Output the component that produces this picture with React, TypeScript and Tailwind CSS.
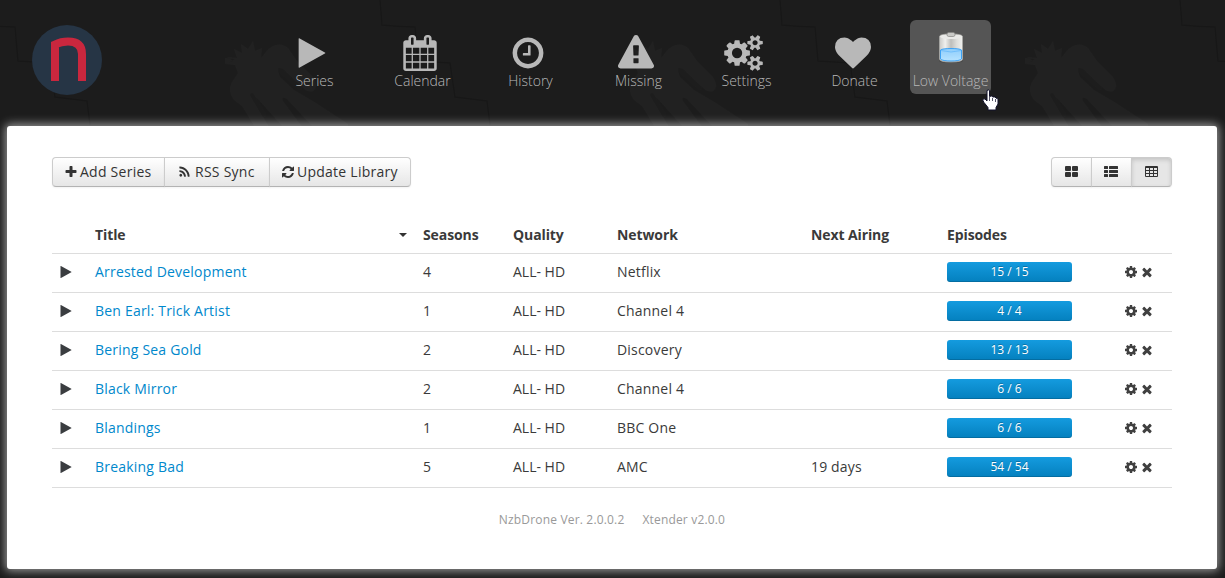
import React from "react";

const PLAY = "M1576 927l-1328 738q-23 13-39.5 3t-16.5-36v-1472q0-26 16.5-36t39.5 3l1328 738q23 13 23 31t-23 31z";
const CALENDAR = "M192 1664h288v-288h-288v288zm352 0h320v-288h-320v288zm-352-352h288v-320h-288v320zm352 0h320v-320h-320v320zm-352-384h288v-288h-288v288zm736 736h320v-288h-320v288zm-384-736h320v-288h-320v288zm768 736h288v-288h-288v288zm-384-352h320v-320h-320v320zm-352-864v-288q0-13-9.5-22.5t-22.5-9.5h-64q-13 0-22.5 9.5t-9.5 22.5v288q0 13 9.5 22.5t22.5 9.5h64q13 0 22.5-9.5t9.5-22.5zm736 864h288v-320h-288v320zm-384-384h320v-288h-320v288zm384 0h288v-288h-288v288zm32-480v-288q0-13-9.5-22.5t-22.5-9.5h-64q-13 0-22.5 9.5t-9.5 22.5v288q0 13 9.5 22.5t22.5 9.5h64q13 0 22.5-9.5t9.5-22.5zm384-64v1280q0 52-38 90t-90 38h-1408q-52 0-90-38t-38-90v-1280q0-52 38-90t90-38h128v-96q0-66 47-113t113-47h64q66 0 113 47t47 113v96h384v-96q0-66 47-113t113-47h64q66 0 113 47t47 113v96h128q52 0 90 38t38 90z";
const CLOCK = "M1024 544v448q0 14-9 23t-23 9h-320q-14 0-23-9t-9-23v-64q0-14 9-23t23-9h224v-352q0-14 9-23t23-9h64q14 0 23 9t9 23zm416 352q0-148-73-273t-198-198-273-73-273 73-198 198-73 273 73 273 198 198 273 73 273-73 198-198 73-273zm224 0q0 209-103 385.5t-279.5 279.5-385.5 103-385.5-103-279.5-279.5-103-385.5 103-385.5 279.5-279.5 385.5-103 385.5 103 279.5 279.5 103 385.5z";
const WARNING = "M1024 1375v-190q0-14-9.5-23.5t-22.5-9.5h-192q-13 0-22.5 9.5t-9.5 23.5v190q0 14 9.5 23.5t22.5 9.5h192q13 0 22.5-9.5t9.5-23.5zm-2-374l18-459q0-12-10-19-13-11-24-11h-220q-11 0-24 11-10 7-10 21l17 457q0 10 10 16.5t24 6.5h185q14 0 23.5-6.5t10.5-16.5zm-14-934l768 1408q35 63-2 126-17 29-46.5 46t-63.5 17h-1536q-34 0-63.5-17t-46.5-46q-37-63-2-126l768-1408q17-31 47-49t65-18 65 18 47 49z";
const HEART = "M896 1664q-26 0-44-18l-624-602q-10-8-27.5-26t-55.5-65.5-68-97.5-53.5-121-23.5-138q0-220 127-344t351-124q62 0 126.5 21.5t120 58 95.5 68.5 76 68q36-36 76-68t95.5-68.5 120-58 126.5-21.5q224 0 351 124t127 344q0 221-229 450l-623 600q-18 18-44 18z";
const COGS = "M896 896q0-106-75-181t-181-75-181 75-75 181 75 181 181 75 181-75 75-181zm768 512q0-52-38-90t-90-38-90 38-38 90q0 53 37.5 90.5t90.5 37.5 90.5-37.5 37.5-90.5zm0-1024q0-52-38-90t-90-38-90 38-38 90q0 53 37.5 90.5t90.5 37.5 90.5-37.5 37.5-90.5zm-384 421v185q0 10-7 19.5t-16 10.5l-155 24q-11 35-32 76 34 48 90 115 7 11 7 20 0 12-7 19-23 30-82.5 89.5t-78.5 59.5q-11 0-21-7l-115-90q-37 19-77 31-11 108-23 155-7 24-30 24h-186q-11 0-20-7.5t-10-17.5l-23-153q-34-10-75-31l-118 89q-7 7-20 7-11 0-21-8-144-133-144-160 0-9 7-19 10-14 41-53t47-61q-23-44-35-82l-152-24q-10-1-17-9.5t-7-19.5v-185q0-10 7-19.5t16-10.5l155-24q11-35 32-76-34-48-90-115-7-11-7-20 0-12 7-20 22-30 82-89t79-59q11 0 21 7l115 90q34-18 77-32 11-108 23-154 7-24 30-24h186q11 0 20 7.5t10 17.5l23 153q34 10 75 31l118-89q8-7 20-7 11 0 21 8 144 133 144 160 0 8-7 19-12 16-42 54t-45 60q23 48 34 82l152 23q10 2 17 10.5t7 19.5zm640 533v140q0 16-149 31-12 27-30 52 51 113 51 138 0 4-4 7-122 71-124 71-8 0-46-47t-52-68q-20 2-30 2t-30-2q-14 21-52 68t-46 47q-2 0-124-71-4-3-4-7 0-25 51-138-18-25-30-52-149-15-149-31v-140q0-16 149-31 13-29 30-52-51-113-51-138 0-4 4-7 4-2 35-20t59-34 30-16q8 0 46 46.5t52 67.5q20-2 30-2t30 2q51-71 92-112l6-2q4 0 124 70 4 3 4 7 0 25-51 138 17 23 30 52 149 15 149 31zm0-1024v140q0 16-149 31-12 27-30 52 51 113 51 138 0 4-4 7-122 71-124 71-8 0-46-47t-52-68q-20 2-30 2t-30-2q-14 21-52 68t-46 47q-2 0-124-71-4-3-4-7 0-25 51-138-18-25-30-52-149-15-149-31v-140q0-16 149-31 13-29 30-52-51-113-51-138 0-4 4-7 4-2 35-20t59-34 30-16q8 0 46 46.5t52 67.5q20-2 30-2t30 2q51-71 92-112l6-2q4 0 124 70 4 3 4 7 0 25-51 138 17 23 30 52 149 15 149 31z";
const PLUS = "M1600 736v192q0 40-28 68t-68 28h-416v416q0 40-28 68t-68 28h-192q-40 0-68-28t-28-68v-416h-416q-40 0-68-28t-28-68v-192q0-40 28-68t68-28h416v-416q0-40 28-68t68-28h192q40 0 68 28t28 68v416h416q40 0 68 28t28 68z";
const RSS = "M576 1344q0 80-56 136t-136 56-136-56-56-136 56-136 136-56 136 56 56 136zm512 123q2 28-17 48-18 21-47 21h-135q-25 0-43-16.5t-20-41.5q-22-229-184.5-391.5t-391.5-184.5q-25-2-41.5-20t-16.5-43v-135q0-29 21-47 17-17 43-17h5q160 13 306 80.5t259 181.5q114 113 181.5 259t80.5 306zm512 2q2 27-18 47-18 20-46 20h-143q-26 0-44.5-17.5t-19.5-42.5q-12-215-101-408.5t-231.5-336-336-231.5-408.5-102q-25-1-42.5-19.5t-17.5-43.5v-143q0-28 20-46 18-18 44-18h3q262 13 501.5 120t425.5 294q187 186 294 425.5t120 501.5z";
const REFRESH = "M1639 1056q0 5-1 7-64 268-268 434.5t-478 166.5q-146 0-282.5-55t-243.5-157l-129 129q-19 19-45 19t-45-19-19-45v-448q0-26 19-45t45-19h448q26 0 45 19t19 45-19 45l-137 137q71 66 161 102t187 36q134 0 250-65t186-179q11-17 53-117 8-23 30-23h192q13 0 22.5 9.5t9.5 22.5zm25-800v448q0 26-19 45t-45 19h-448q-26 0-45-19t-19-45 19-45l138-138q-148-137-349-137-134 0-250 65t-186 179q-11 17-53 117-8 23-30 23h-199q-13 0-22.5-9.5t-9.5-22.5v-7q65-268 270-434.5t480-166.5q146 0 284 55.5t245 156.5l130-129q19-19 45-19t45 19 19 45z";
const TIMES = "M1490 1322q0 40-28 68l-136 136q-28 28-68 28t-68-28l-294-294-294 294q-28 28-68 28t-68-28l-136-136q-28-28-28-68t28-68l294-294-294-294q-28-28-28-68t28-68l136-136q28-28 68-28t68 28l294 294 294-294q28-28 68-28t68 28l136 136q28 28 28 68t-28 68l-294 294 294 294q28 28 28 68z";
const COG = "M1152 896q0-106-75-181t-181-75-181 75-75 181 75 181 181 75 181-75 75-181zm512-109v222q0 12-8 23t-20 13l-185 28q-19 54-39 91 35 50 107 138 10 12 10 25t-9 23q-27 37-99 108t-94 71q-12 0-26-9l-138-108q-44 23-91 38-16 136-29 186-7 28-36 28h-222q-14 0-24.5-8.5t-11.5-21.5l-28-184q-49-16-90-37l-141 107q-10 9-25 9-14 0-25-11-126-114-165-168-7-10-7-23 0-12 8-23 15-21 51-66.5t54-70.5q-27-50-41-99l-183-27q-13-2-21-12.5t-8-23.5v-222q0-12 8-23t19-13l186-28q14-46 39-92-40-57-107-138-10-12-10-24 0-10 9-23 26-36 98.5-107.5t94.5-71.5q13 0 26 10l138 107q44-23 91-38 16-136 29-186 7-28 36-28h222q14 0 24.5 8.5t11.5 21.5l28 184q49 16 90 37l142-107q9-9 24-9 13 0 25 10 129 119 165 170 7 8 7 22 0 12-8 23-15 21-51 66.5t-54 70.5q26 50 41 98l183 28q13 2 21 12.5t8 23.5z";

function Glyph({ d, box = "0 0 1792 1792", className }: { d: string; box?: string; className: string }) {
  return (
    <svg viewBox={box} className={className} fill="currentColor" aria-hidden="true">
      <path d={d} />
    </svg>
  );
}

function Backdrop() {
  return (
    <svg className="absolute inset-0 h-full w-full" aria-hidden="true">
      <defs>
        <pattern id="tile" width="400" height="578" patternUnits="userSpaceOnUse">
          <g fill="none" stroke="#171717" strokeWidth="1.500">
            <path d="M380 0L382 25L400 26.500" />
            <path d="M0 26.500l15 .5 3 34 32 2 5 34 32 4 3 24" />
          </g>
          <path
            fill="#212121"
            d="M225 64l8-3-6-4 10 1-3-9 8 4-1-9 7 5 5-8 2 10 7-3-1 10 5-6q3-4 7-6 8-4 15 2l9 13 16 16q6 10 0 14-5 2-11-4l-19-18q-6-3-5 2l2 6 14 13 22 13 32 21v3h-35l-26-28q-6-4-4 2l19 26h-19l-25-28q-5-4-5 1l16 27h-14l-13-21-8-6q-7-9-2-18l6-9-3-8-9-1 9-5-10-1z"
          />
          <g fill="none" stroke="#1d1d1d" strokeWidth="4" strokeLinecap="round">
            <path d="M252 95l12 20M280 70l20 18" />
          </g>
        </pattern>
      </defs>
      <rect width="100%" height="100%" fill="url(#tile)" />
    </svg>
  );
}

function Logo() {
  return (
    <svg className="ml-8 mt-[25px] h-[70px] w-[70px] shrink-0" viewBox="0 0 70 70" aria-hidden="true">
      <circle cx="35" cy="35" r="35" fill="#263545" />
      <path d="M23 56V19.500Q29 16.500 36 16.500Q50 16.500 50 29V56" fill="none" stroke="#c9273e" strokeWidth="8" />
    </svg>
  );
}

function Battery() {
  return (
    <svg className="mt-[11px] h-8 w-8" viewBox="0 0 32 32" aria-hidden="true">
      <defs>
        <linearGradient id="shell">
          <stop offset="0" stopColor="#c9c9c6" />
          <stop offset=".25" stopColor="#f0f0ee" />
          <stop offset=".5" stopColor="#bebebb" />
          <stop offset=".75" stopColor="#dededb" />
          <stop offset="1" stopColor="#f0f0ee" />
        </linearGradient>
        <linearGradient id="charge" x2="0" y2="1">
          <stop offset="0" stopColor="#8fcdfb" />
          <stop offset="1" stopColor="#b6e3ff" />
        </linearGradient>
      </defs>
      <ellipse cx="16" cy="30" rx="12" ry="2" fill="#333" opacity=".35" />
      <path d="M4.500 5.500q0-2.500 11.500-2.500t11.500 2.500v22.500q0 3-11.500 3T4.500 28z" fill="url(#shell)" stroke="#a9a9a6" strokeWidth=".8" />
      <path d="M5 5.700q0-2.200 11-2.200t11 2.200Q25 8 16 8T5 5.700z" fill="#e9e9e7" />
      <rect x="12" y="1.500" width="8" height="4" rx="1.700" fill="#c9c9c6" stroke="#858582" strokeWidth=".7" />
      <path d="M5.500 19q2-1.500 10.500-1.500T26.500 19v9q-2 2-10.500 2T5.500 28z" fill="url(#charge)" stroke="#3da2f4" />
      <path d="M6 19.500q10 3 20 0" fill="none" stroke="#66b9fa" strokeWidth=".8" />
    </svg>
  );
}

function Pointer() {
  return (
    <svg className="absolute left-[982px] top-[89px] z-10 h-[22px] w-[17px]" viewBox="0 0 17 22" aria-hidden="true">
      <path d="M5 1.500q1.500-1.200 2.500 0v6l2-.5 1.500 1 2-.1 1 1.200 1.500.5q.6.600.5 1.400V15l-2 3.500V21H6v-2.500L2 13.500.7 11Q1.500 9.300 3 10l2 2z" fill="#fff" stroke="#11112b" />
      <path d="M7.500 8v4M10.500 9v3M13.500 10v3" stroke="#26263d" strokeWidth=".8" />
    </svg>
  );
}

const nav = [
  { label: "Series", icon: <Glyph d={PLAY} className="mr-[6px] h-[34px] w-[34px]" /> },
  { label: "Calendar", icon: <Glyph d={CALENDAR} className="mr-[5px] h-9 w-9" /> },
  { label: "History", icon: <Glyph d={CLOCK} className="mr-[5px] h-9 w-9" /> },
  { label: "Missing", icon: <Glyph d={WARNING} className="mr-[5px] h-9 w-9" /> },
  { label: "Settings", icon: <Glyph d={COGS} box="0 0 1920 1792" className="mr-[6px] h-9 w-[39px]" /> },
  { label: "Donate", icon: <Glyph d={HEART} className="mr-[4px] h-9 w-9" /> },
];

const columns = "grid grid-cols-[43px_328px_90px_104px_194px_136px_177px_48px] items-center border-b border-[#ddd]";

const shows = [
  ["Arrested Development", "4", "Netflix", "", "15 / 15"],
  ["Ben Earl: Trick Artist", "1", "Channel 4", "", "4 / 4"],
  ["Bering Sea Gold", "2", "Discovery", "", "13 / 13"],
  ["Black Mirror", "2", "Channel 4", "", "6 / 6"],
  ["Blandings", "1", "BBC One", "", "6 / 6"],
  ["Breaking Bad", "5", "AMC", "19 days", "54 / 54"],
];

const button = "flex h-[30px] items-center border border-[#ccc] border-b-[#b3b3b3] bg-gradient-to-b from-white to-[#e6e6e6] tracking-[0.25px] text-[#333] shadow-[inset_0_1px_0_rgba(255,255,255,.2),0_1px_2px_rgba(0,0,0,.05)]";

export default function App() {
  return (
    <div className="relative h-[578px] w-[1225px] overflow-hidden bg-[#1c1c1c] font-['Open_Sans',sans-serif] text-[14px] leading-5 text-[#333]">
      <Backdrop />
      <header className="relative flex h-[126px]">
        <Logo />
        <nav className="ml-[158.500px] flex text-[#b8b8b8]">
          {nav.map((n) => (
            <a key={n.label} className="flex w-[108px] flex-col items-center pt-[35px]">
              <span className="flex h-9 items-center">{n.icon}</span>
              <span className="font-light">{n.label}</span>
            </a>
          ))}
          <a className="ml-[1.500px] mt-5 flex h-[74px] w-[81px] flex-col items-center rounded-[6px] bg-[#555]">
            <Battery />
            <span className="mt-[8px] whitespace-nowrap font-light">Low Voltage</span>
          </a>
        </nav>
      </header>
      <Pointer />
      <main className="relative ml-[7px] h-[443px] w-[1210px] rounded-[3px] bg-white px-[45px] pt-[31px] shadow-[0_0_10px_2px_rgba(255,255,255,.55)]">
        <div className="flex justify-between">
          <div className="flex">
            <button className={button + " w-[113px] rounded-l pl-[11px]"}>
              <Glyph d={PLUS} className="mr-[2px] h-[14px] w-[14px]" />
              Add Series
            </button>
            <button className={button + " -ml-px w-[106px] pl-[13px]"}>
              <Glyph d={RSS} className="mr-1 h-[14px] w-[13px]" />
              RSS Sync
            </button>
            <button className={button + " -ml-px w-[142px] rounded-r pl-[11px]"}>
              <Glyph d={REFRESH} className="mr-[2px] h-[14px] w-[14px]" />
              Update Library
            </button>
          </div>
          <div className="flex">
            <button className={button + " w-[41px] justify-center rounded-l"}>
              <svg className="mb-px h-[11px] w-[13px]" viewBox="0 0 13 11" fill="currentColor">
                <rect width="6" height="5" rx="1" />
                <rect x="7" width="6" height="5" rx="1" />
                <rect y="6" width="6" height="5" rx="1" />
                <rect x="7" y="6" width="6" height="5" rx="1" />
              </svg>
            </button>
            <button className={button + " -ml-px w-[41px] pl-[12px]"}>
              <svg className="mb-px h-[11px] w-[14px]" viewBox="0 0 14 11" fill="currentColor">
                {[0, 4, 8].map((y) => (
                  <g key={y}>
                    <rect y={y} width="4" height="3" rx=".5" />
                    <rect x="5" y={y} width="9" height="3" rx=".5" />
                  </g>
                ))}
              </svg>
            </button>
            <button className="-ml-px flex h-[30px] w-[41px] items-center justify-center rounded-r border border-[#ccc] border-b-[#b3b3b3] bg-[#e6e6e6] shadow-[inset_0_2px_4px_rgba(0,0,0,.15),0_1px_2px_rgba(0,0,0,.05)]">
              <svg className="mb-px h-[11px] w-[13px]" viewBox="0 0 13 11">
                <rect width="13" height="11" rx="1" fill="#333" />
                <g fill="#e6e6e6">
                  {[2, 5, 8].map((y) => (
                    <g key={y}>
                      <rect x="1" y={y} width="3" height="2" />
                      <rect x="5" y={y} width="3" height="2" />
                      <rect x="9" y={y} width="3" height="2" />
                    </g>
                  ))}
                </g>
              </svg>
            </button>
          </div>
        </div>

        <section className="mt-[28px] text-[#3a3a3a]">
          <div className={columns + " h-[39px] pt-[2px] font-bold tracking-[-0.1px]"}>
            <span />
            <span className="flex items-center justify-between pr-4">
              Title
              <svg className="h-1 w-2" viewBox="0 0 8 4">
                <path d="M0 0h8L4 4z" fill="#333" />
              </svg>
            </span>
            <span>Seasons</span>
            <span>Quality</span>
            <span>Network</span>
            <span>Next Airing</span>
            <span>Episodes</span>
            <span />
          </div>
          {shows.map(([title, seasons, network, airing, episodes]) => (
            <div key={title} className={columns + " h-[39px] pb-[2px]"}>
              <Glyph d={PLAY} className="ml-[6.500px] h-[14px] w-[14px] text-[#3a3d40]" />
              <a className="tracking-[0.2px] text-[#0088cc]">{title}</a>
              <span>{seasons}</span>
              <span>{"ALL- HD"}</span>
              <span className="tracking-[0.2px]">{network}</span>
              <span className="tracking-[0.15px]">{airing}</span>
              <span className="h-5 w-[125px] rounded-[3px] bg-gradient-to-b from-[#149bdf] to-[#0480be] text-center text-[12px] leading-5 text-white shadow-[inset_0_-1px_0_rgba(0,0,0,.15)] [text-shadow:0_-1px_0_rgba(0,0,0,.25)]">
                {episodes}
              </span>
              <span className="flex items-center gap-[2px] text-[#404040]">
                <Glyph d={COG} className="h-[14px] w-[14px]" />
                <Glyph d={TIMES} className="-ml-[0.500px] h-[14px] w-[14px]" />
              </span>
            </div>
          ))}
        </section>
        <footer className="mt-[22px] flex justify-center gap-[18px] text-[12px] tracking-[0.17px] text-[#999]">
          <span>NzbDrone Ver. 2.0.0.2</span>
          <span>Xtender v2.0.0</span>
        </footer>
      </main>
    </div>
  );
}
